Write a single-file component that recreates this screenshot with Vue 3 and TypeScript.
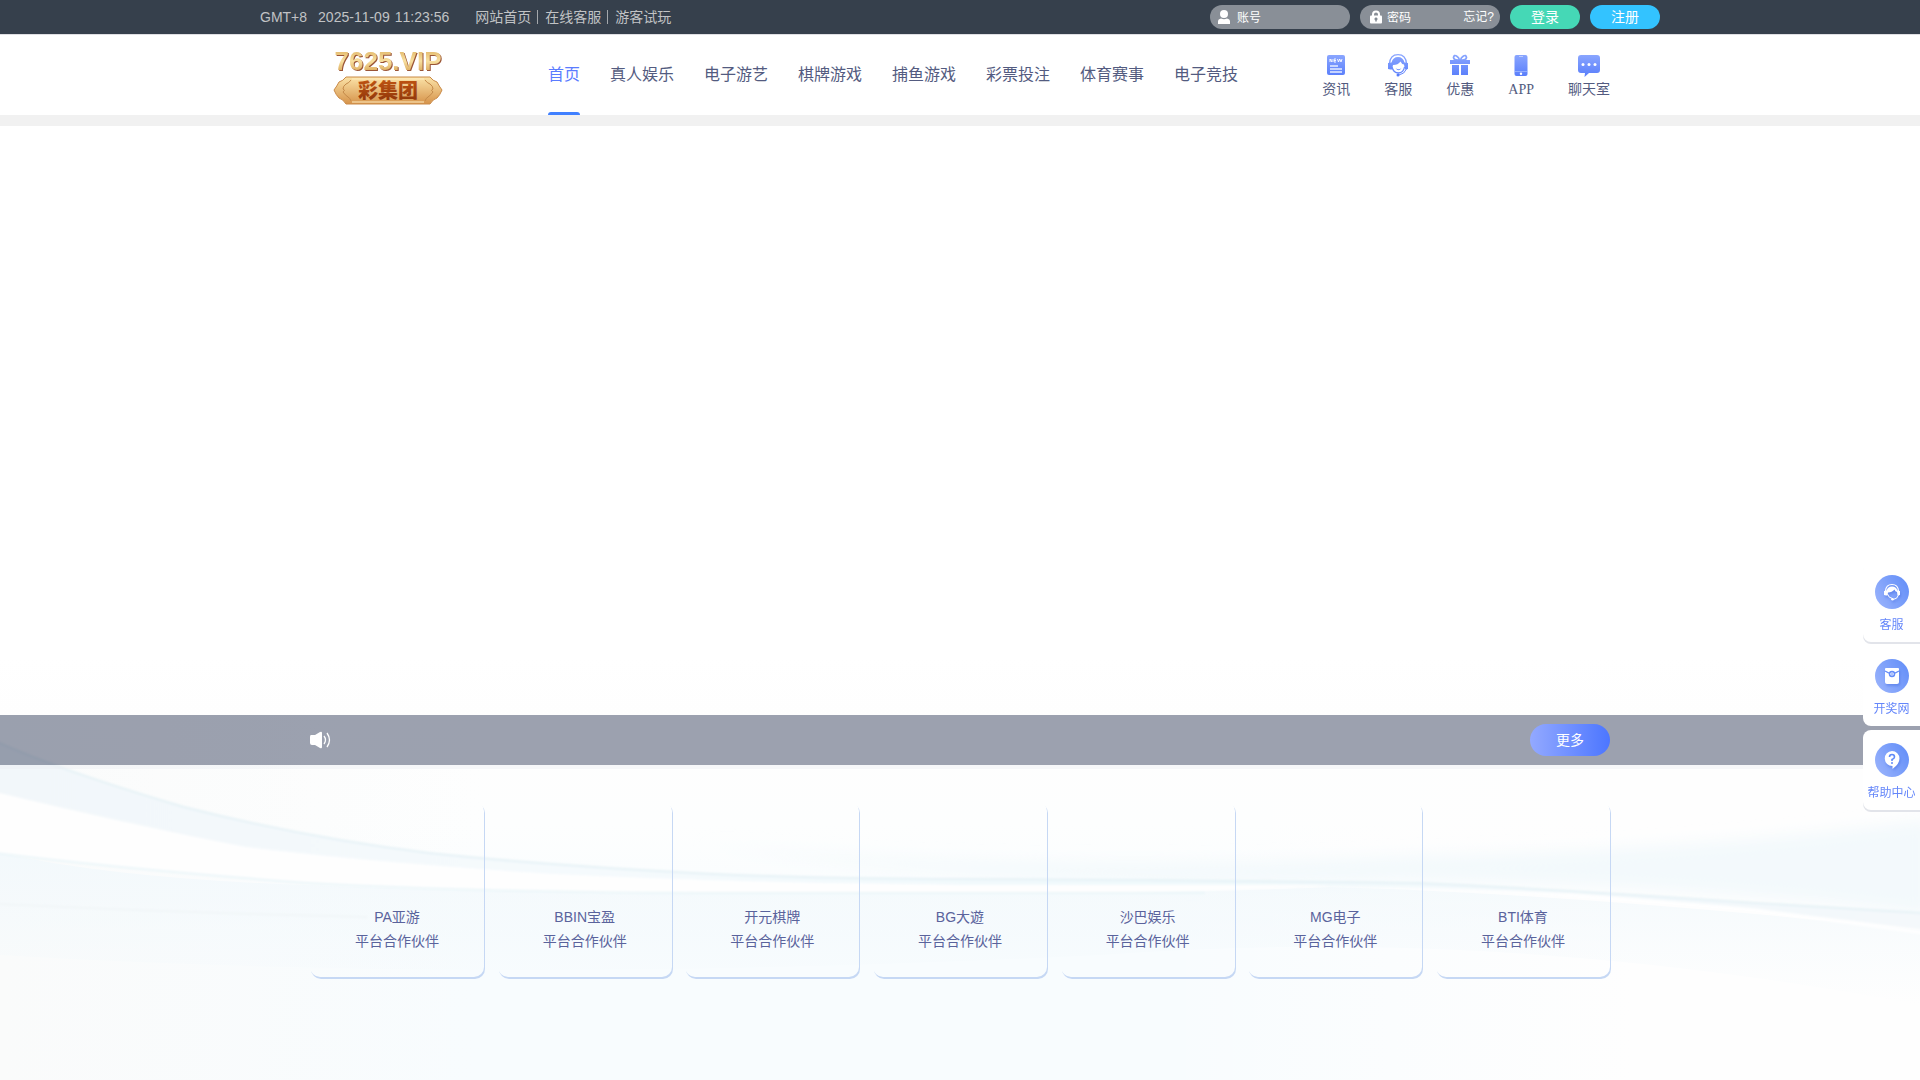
<script setup lang="ts">
import { ref } from 'vue'

interface QuickLink {
  icon: 'news' | 'service' | 'gift' | 'phone' | 'chat'
  label: string
}

interface SideLink {
  icon: 'service' | 'lottery' | 'help'
  label: string
}

const today = ref<string>('2025-11-09')
const time = ref<string>('11:23:56')
const account = ref<string>('')
const password = ref<string>('')
const active = ref<string>('首页')

const topLinks: string[] = ['网站首页', '在线客服', '游客试玩']

const menu: string[] = [
  '首页',
  '真人娱乐',
  '电子游艺',
  '棋牌游戏',
  '捕鱼游戏',
  '彩票投注',
  '体育赛事',
  '电子竞技',
]

const quickLinks: QuickLink[] = [
  { icon: 'news', label: '资讯' },
  { icon: 'service', label: '客服' },
  { icon: 'gift', label: '优惠' },
  { icon: 'phone', label: 'APP' },
  { icon: 'chat', label: '聊天室' },
]

const partners: string[] = ['PA亚游', 'BBIN宝盈', '开元棋牌', 'BG大遊', '沙巴娱乐', 'MG电子', 'BTI体育']

const sideLinks: SideLink[] = [
  { icon: 'service', label: '客服' },
  { icon: 'lottery', label: '开奖网' },
  { icon: 'help', label: '帮助中心' },
]
</script>

<template>
  <div class="page">
    <svg class="defs" width="0" height="0" aria-hidden="true">
      <defs>
        <linearGradient id="blue" x1="0" y1="0" x2="0" y2="24" gradientUnits="userSpaceOnUse">
          <stop offset="0" stop-color="#8ea9ff" />
          <stop offset="1" stop-color="#587dfb" />
        </linearGradient>
      </defs>
    </svg>

    <div class="topbar">
      <div class="topbar-inner">
        <div class="clock">
          <span class="zone">GMT+8</span>
          <time>{{ today }}</time>
          <time>{{ time }}</time>
        </div>
        <nav class="top-links">
          <a v-for="link in topLinks" :key="link" href="#">{{ link }}</a>
        </nav>
        <form class="login" @submit.prevent>
          <label class="field">
            <svg width="12" height="14" viewBox="0 0 12 14" fill="#fff" aria-hidden="true">
              <circle cx="6" cy="4" r="4" />
              <path d="M0 14V11.500Q0 9 3 8.500Q6 10 9 8.500Q12 9 12 11.500V14Z" />
            </svg>
            <input v-model="account" type="text" placeholder="账号" aria-label="账号" />
          </label>
          <div class="field">
            <svg width="12" height="14" viewBox="0 0 12 14" aria-hidden="true">
              <path d="M3 7V4.500a3 3 0 0 1 6 0V7" fill="none" stroke="#fff" stroke-width="2" />
              <rect y="5.500" width="12" height="8" rx="1" fill="#fff" />
              <path d="M6 7.500V11.500M4.500 9H7.500" stroke="#7d848d" stroke-width="1.500" />
            </svg>
            <input v-model="password" type="password" placeholder="密码" aria-label="密码" />
            <a class="forgot" href="#">忘记?</a>
          </div>
          <button class="btn signin" type="submit">登录</button>
          <button class="btn signup" type="button">注册</button>
        </form>
      </div>
    </div>

    <header class="header">
      <div class="header-inner">
        <a class="logo" href="#" aria-label="7625.VIP 彩集团">
          <svg width="112" height="62" viewBox="0 0 112 62">
            <defs>
              <linearGradient id="gold" x1="0" y1="0" x2="0" y2="1">
                <stop offset="0" stop-color="#d9a855" />
                <stop offset="0.500" stop-color="#f8e0a0" />
                <stop offset="1" stop-color="#cf9440" />
              </linearGradient>
              <linearGradient id="plaque" x1="0" y1="0" x2="0" y2="1">
                <stop offset="0" stop-color="#fbe3a8" />
                <stop offset="1" stop-color="#d6934a" />
              </linearGradient>
              <linearGradient id="rust" x1="0" y1="0" x2="0" y2="1">
                <stop offset="0" stop-color="#c95a14" />
                <stop offset="1" stop-color="#8a3208" />
              </linearGradient>
            </defs>
            <text class="logo-name" x="56" y="26" text-anchor="middle" fill="url(#gold)">7625.VIP</text>
            <path
              d="M14 33H98Q101 37 105 38Q107 42 110 46Q108 51 105 54Q101 55 98 60H14Q11 55 7 54Q4 51 2 46Q5 42 7 38Q11 37 14 33Z"
              fill="url(#plaque)" stroke="#c98a48"
            />
            <path
              d="M19 36Q17 39 14 40Q11 42 11 45Q14 46 11 48Q13 51 16 53Q18 54 19 57M93 36Q95 39 98 40Q101 42 101 45Q98 46 101 48Q99 51 96 53Q94 54 93 57"
              fill="none" stroke="#c48a4a"
            />
            <path d="M20 35H92M20 58H92" stroke="#ffeec2" />
            <text class="logo-cn" x="56" y="54" text-anchor="middle" fill="url(#rust)">彩集团</text>
          </svg>
        </a>

        <nav class="menu">
          <a
            v-for="item in menu"
            :key="item"
            href="#"
            :class="{ active: item === active }"
            @click.prevent="active = item"
          >{{ item }}</a>
        </nav>

        <nav class="quick">
          <a v-for="link in quickLinks" :key="link.label" href="#">
            <svg width="24" height="24" viewBox="0 0 24 24" aria-hidden="true">
              <g v-if="link.icon === 'news'">
                <rect x="3" y="2" width="18" height="20" rx="2" fill="url(#blue)" />
                <path
                  d="M6 9V6L8 9V6M12 6H10V9H12M10 7.500H12M13.500 6L14.500 9L15.700 6L17 9L18 6"
                  fill="none" stroke="#fff" stroke-width="0.900"
                />
                <path d="M6 13H14M6 16H18M6 19H18" stroke="#e8eeff" stroke-width="1.300" />
              </g>
              <g v-else-if="link.icon === 'service'">
                <path d="M3.500 11Q4 1.700 12 1.700Q20 1.700 20.500 11" fill="none" stroke="url(#blue)" stroke-width="1.200" />
                <path
                  d="M5.500 9.500Q7 4 12 4Q17 4 18.500 9.500L22 10V16L19 16.500L18 11.500Q15.500 11 14.500 8.500Q12 12 7 12L6 16.500H4.500L2 16V10Z"
                  fill="url(#blue)"
                />
                <path d="M6 14Q7.500 20 12.500 20Q17.500 19.500 18.500 14" fill="none" stroke="url(#blue)" stroke-width="1.300" />
                <path d="M9.500 15Q12.500 17.500 15.500 15Q12.500 19.500 9.500 15Z" fill="#668aff" />
                <path d="M20.500 16Q18.500 21 13 22" fill="none" stroke="#6788fc" />
                <circle cx="12" cy="22" r="1.500" fill="#587dfb" />
              </g>
              <g v-else-if="link.icon === 'gift'" fill="url(#blue)">
                <path
                  d="M11.500 7Q6 7.500 5.500 4.500Q6 1.500 8.500 3Q11 4.500 11.500 7ZM12.500 7Q18 7.500 18.500 4.500Q18 1.500 15.500 3Q13 4.500 12.500 7Z"
                  fill="none" stroke="#86a3ff" stroke-width="1.700"
                />
                <path d="M2 7H22V11H2ZM4 12H11V22H4ZM13 12H20V22H13Z" />
              </g>
              <g v-else-if="link.icon === 'phone'">
                <rect x="5.500" y="2" width="13" height="21" rx="2" fill="url(#blue)" />
                <path d="M6 18.500H18" stroke="#a9beff" stroke-width="0.700" />
                <path d="M10 3.500H14" stroke="#bccbff" />
                <circle cx="12" cy="20.700" r="1.200" fill="#fff" />
              </g>
              <g v-else>
                <path
                  d="M4 2H20Q23 2 23 5V17Q23 20 20 20H12L7.500 24L8 20H4Q1 20 1 17V5Q1 2 4 2Z"
                  fill="url(#blue)"
                />
                <g fill="#fff">
                  <circle cx="6" cy="11.500" r="1.500" />
                  <circle cx="12" cy="11.500" r="1.500" />
                  <circle cx="18" cy="11.500" r="1.500" />
                </g>
              </g>
            </svg>
            <span>{{ link.label }}</span>
          </a>
        </nav>
      </div>
    </header>

    <main class="main">
      <section class="banner"></section>

      <div class="lower">
        <svg class="waves" viewBox="0 0 1920 365" preserveAspectRatio="none" aria-hidden="true">
          <defs>
            <linearGradient id="base" x1="0" y1="0" x2="0" y2="1">
              <stop offset="0" stop-color="#fefefe" />
              <stop offset="0.300" stop-color="#fdfefe" />
              <stop offset="0.600" stop-color="#f8fcfe" />
              <stop offset="1" stop-color="#f8fcfe" />
            </linearGradient>
            <linearGradient id="sides" x1="0" y1="0" x2="1" y2="0">
              <stop offset="0" stop-color="#fafbfb" />
              <stop offset="0.250" stop-color="#fafbfb" stop-opacity="0" />
              <stop offset="0.600" stop-color="#fefefe" stop-opacity="0" />
              <stop offset="0.850" stop-color="#fefefe" />
            </linearGradient>
            <linearGradient id="ribbon" x1="0" y1="0" x2="1" y2="0">
              <stop offset="0" stop-color="#f2f7fa" />
              <stop offset="0.300" stop-color="#f5fafd" />
              <stop offset="0.600" stop-color="#f0f9fc" />
              <stop offset="1" stop-color="#f4f8fb" />
            </linearGradient>
            <linearGradient id="deep" x1="0" y1="0" x2="0" y2="1">
              <stop offset="0" stop-color="#f3f9fc" />
              <stop offset="1" stop-color="#f3f9fc" stop-opacity="0" />
            </linearGradient>
            <linearGradient id="glint" x1="0" y1="0" x2="1" y2="0">
              <stop offset="0" stop-color="#fff" stop-opacity="0" />
              <stop offset="0.500" stop-color="#fff" />
            </linearGradient>
            <filter id="soft" x="-5%" y="-20%" width="110%" height="140%">
              <feGaussianBlur stdDeviation="8" />
            </filter>
            <filter id="faint" x="-5%" y="-20%" width="110%" height="140%">
              <feGaussianBlur stdDeviation="1" />
            </filter>
          </defs>
          <rect width="1920" height="365" fill="url(#base)" />
          <rect width="1920" height="365" fill="url(#sides)" />
          <path
            d="M700 130Q1000 160 1400 142Q1700 135 1930 105V200Q1700 170 1400 165Q1000 175 700 130Z"
            fill="#f3f9fc" filter="url(#soft)"
          />
          <path
            d="M0 138Q120 164 306 170Q490 178 735 178H960Q1205 178 1330 172Q1560 178 1920 215V290Q1500 210 1100 240Q500 270 0 240Z"
            fill="url(#deep)"
          />
          <g filter="url(#faint)">
            <path
              d="M-5 26Q61 56 184 92Q306 123 429 138Q551 151 735 160Q860 164 960 164Q1205 165 1419 168Q1572 175 1756 188L1925 198V215Q1756 192 1572 178Q1388 170 1205 170H960Q735 168 551 159Q367 147 245 132Q122 108 -5 77Z"
              fill="url(#ribbon)"
            />
            <path
              d="M-5 77Q122 108 245 132Q367 147 551 159Q735 168 960 170H1330Q1205 178 960 178H735Q490 176 306 168Q122 154 -5 138Z"
              fill="#fefefe"
            />
            <path
              d="M-5 26Q61 56 184 92Q306 123 429 138Q551 151 735 160Q860 164 960 164Q1205 165 1419 168Q1572 175 1756 188L1925 198"
              fill="none" stroke="#e6f2f6" stroke-width="2"
            />
            <path d="M-5 138Q122 154 306 168Q490 178 735 178H1205" fill="none" stroke="#ebf6f9" stroke-width="2" />
            <path d="M-5 189Q180 198 367 202" fill="none" stroke="#f1f6f8" stroke-width="2" />
            <path d="M1340 170Q1572 178 1756 195L1925 218" fill="none" stroke="url(#glint)" stroke-width="3" />
          </g>
        </svg>

        <section class="notice">
          <div class="notice-inner">
            <svg width="22" height="18" viewBox="0 0 22 18" aria-hidden="true">
              <path d="M1 4Q0 4 0 6V12Q0 14 2 14H5L10 17Q12 18 12 16V2Q12 0 10 1L5 4H2Z" fill="#fff" />
              <path d="M14 5Q17 9 14 13M17 2Q22 9 17 16" fill="none" stroke="#fff" stroke-width="1.300" />
            </svg>
            <button class="more" type="button">更多</button>
          </div>
        </section>

        <section class="partners">
          <article v-for="name in partners" :key="name" class="partner">
            <p>{{ name }}</p>
            <p>平台合作伙伴</p>
          </article>
        </section>
      </div>
    </main>

    <aside class="side">
      <a v-for="link in sideLinks" :key="link.label" href="#">
        <span class="disc">
          <svg width="18" height="18" viewBox="0 0 18 18" aria-hidden="true">
            <g v-if="link.icon === 'service'">
              <path d="M2.500 8Q3 1.500 9 1.500Q15 1.500 15.500 8" fill="none" stroke="#fff" stroke-width="1.200" />
              <path
                d="M3.500 7.500Q5 3.500 9 3.500Q13 3.500 14.500 7.500L17 8V12L14.500 12.500L14 9Q12 8.500 11.500 6.500Q9 9.500 5 9.500L4.500 12.500H3L1 12V8Z"
                fill="#fff"
              />
              <path d="M4.500 11Q5.500 15 9.500 15.500" fill="none" stroke="#fff" />
              <path d="M15.500 12Q14.500 16 10 16.500" fill="none" stroke="#fff" />
              <circle cx="9.500" cy="16.300" r="1.300" fill="#fff" />
            </g>
            <g v-else-if="link.icon === 'lottery'">
              <path d="M3 1H15Q16 1 16 2V15Q16 17 14 17H4Q2 17 2 15V2Q2 1 3 1Z" fill="#fff" />
              <path d="M2 4Q9 9 16 4" fill="none" stroke="#648cf9" stroke-width="1.200" />
              <circle cx="9" cy="7" r="2.500" fill="#fff" stroke="#648cf9" stroke-width="1.500" />
              <path d="M9 5.500V8.500" stroke="#648cf9" />
            </g>
            <g v-else>
              <path d="M9 0A7.500 7.500 0 0 1 16.500 7.500Q16.500 13 9.500 18V15A7.500 7.500 0 0 1 9 0Z" fill="#fff" />
              <path
                d="M6.500 6Q6.500 3.500 9 3.500Q11.500 3.500 11.500 6Q11.500 7.500 9 8.500V10"
                fill="none" stroke="#5f8af8" stroke-width="1.600"
              />
              <circle cx="9" cy="12" r="1" fill="#5f8af8" />
            </g>
          </svg>
        </span>
        <span>{{ link.label }}</span>
      </a>
    </aside>
  </div>
</template>

<style>
body {
  margin: 0;
  background: #fff;
}
</style>

<style scoped>
.page {
  display: flex;
  flex-direction: column;
  min-height: 100vh;
  overflow-x: hidden;
  font-family: "Liberation Sans", "Noto Sans CJK SC", sans-serif;
  font-size: 14px;
  line-height: 20px;
}

.defs {
  position: absolute;
}

a {
  color: inherit;
  text-decoration: none;
}

.topbar {
  background: #36404c;
  border-bottom: 1px solid #dfdfe3;
}

.topbar-inner {
  display: flex;
  align-items: center;
  box-sizing: border-box;
  max-width: 1400px;
  height: 34px;
  margin: 0 auto;
  color: #c1c3c5;
}

.clock {
  display: flex;
  gap: 5px;
  font-kerning: none;
}

.zone {
  margin-right: 6px;
}

.top-links {
  display: flex;
  align-items: center;
  margin-left: 26px;
}

.top-links a + a {
  margin-left: 6px;
}

.top-links a + a::before {
  content: "";
  display: inline-block;
  width: 1px;
  height: 14px;
  margin-right: 7px;
  background: #a4a8ac;
  vertical-align: -2px;
}

.login {
  display: flex;
  gap: 10px;
  margin-left: auto;
}

.field {
  display: flex;
  align-items: center;
  gap: 7px;
  box-sizing: border-box;
  width: 140px;
  height: 24px;
  padding: 0 6px 0 8px;
  border-radius: 12px;
  background: #898f97;
  color: #fff;
  font-size: 12px;
}

.field svg {
  flex: none;
}

div.field {
  gap: 5px;
  padding-left: 10px;
}

.field input {
  flex: 1;
  min-width: 0;
  padding: 2px 0 0;
  border: 0;
  outline: 0;
  background: none;
  color: #fff;
  font: inherit;
}

.field input::placeholder {
  color: #fff;
  opacity: 1;
}

.btn {
  width: 70px;
  height: 24px;
  padding: 0;
  border: 0;
  border-radius: 12px;
  color: #fff;
  font: inherit;
}

.signin {
  background: #45d8b6;
}

.signup {
  background: #33c3ff;
}

.header {
  background: #fff;
  border-bottom: 11px solid #f1f1f1;
}

.header-inner {
  display: flex;
  align-items: center;
  max-width: 1300px;
  height: 80px;
  margin: 0 auto;
  color: #535b80;
}

.logo {
  display: flex;
  margin-left: 22px;
}

.logo-name {
  font: bold 26px "Liberation Sans", sans-serif;
  filter: drop-shadow(1px 1px 0 #9a5436);
}

.logo-cn {
  font: 900 20px "Noto Sans CJK SC", sans-serif;
}

.menu {
  display: flex;
  gap: 30px;
  margin-left: 104px;
  font-size: 16px;
  line-height: 80px;
}

.menu a {
  position: relative;
  height: 80px;
}

.menu .active {
  color: #5b7cff;
}

.menu .active::after {
  content: "";
  position: absolute;
  right: 0;
  bottom: 0;
  left: 0;
  height: 3px;
  border-radius: 3px 3px 0 0;
  background: #4080ff;
}

.quick {
  display: flex;
  gap: 34px;
  margin-left: auto;
  padding-top: 2px;
  font-family: "Liberation Serif", "Noto Sans CJK SC", serif;
}

.quick a {
  display: flex;
  flex-direction: column;
  align-items: center;
  gap: 3px;
}

.main {
  display: flex;
  flex: 1;
  flex-direction: column;
}

.banner {
  height: 589px;
  background: linear-gradient(#fff 90%, #fefefe);
}

.lower {
  position: relative;
  flex: 1;
}

.waves {
  position: absolute;
  inset: 0;
  width: 100%;
  height: 100%;
}

.notice {
  position: relative;
  background: rgba(56, 65, 94, 0.49);
  box-shadow: 0 4px 0 rgba(235, 238, 243, 0.4);
}

.notice-inner {
  display: flex;
  align-items: center;
  justify-content: space-between;
  max-width: 1300px;
  height: 50px;
  margin: 0 auto;
}

.more {
  width: 80px;
  height: 32px;
  padding: 0;
  border: 0;
  border-radius: 16px;
  background: linear-gradient(90deg, #93a9ff, #4c76ff);
  color: #fff;
  font: inherit;
}

.partners {
  position: relative;
  display: flex;
  justify-content: space-between;
  max-width: 1300px;
  margin: 36px auto 0;
  padding-bottom: 40px;
}

.partner {
  box-sizing: border-box;
  width: 174px;
  height: 176px;
  padding-top: 104px;
  border-radius: 10px;
  box-shadow: 1px 2px 0 #c6d8f4;
  color: #5a639c;
  line-height: 24px;
  text-align: center;
}

.partner p {
  margin: 0;
}

.side {
  position: fixed;
  top: 562px;
  right: 0;
  display: flex;
  flex-direction: column;
  gap: 4px;
  width: 57px;
}

.side a {
  display: flex;
  flex-direction: column;
  align-items: center;
  gap: 6px;
  box-sizing: border-box;
  height: 80px;
  padding-top: 13px;
  border-radius: 8px 0 0 8px;
  background: #fff;
  box-shadow: 0 2px 0 #e2e4ea;
  color: #6486fa;
  font-size: 12px;
  white-space: nowrap;
}

.side a:nth-child(2) {
  box-shadow: none;
}

.disc {
  display: flex;
  align-items: center;
  justify-content: center;
  width: 34px;
  height: 34px;
  border-radius: 50%;
  background: linear-gradient(60deg, #9db5fc, #5f8cf8);
}

.disc svg {
  filter: drop-shadow(1px 2px 1px rgba(60, 100, 220, 0.4));
}
</style>
